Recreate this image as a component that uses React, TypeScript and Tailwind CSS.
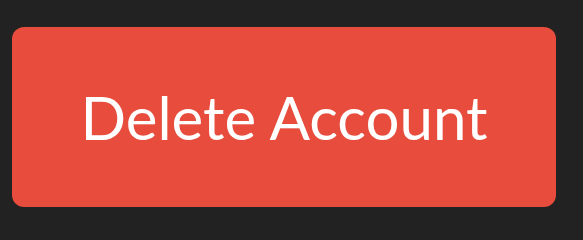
export default function App() {
  return (
    <div className="min-h-screen w-full bg-[#222222] pt-[27px] pl-3 font-['Lato','Liberation_Sans',sans-serif]">
      <button
        type="button"
        className="flex h-[180px] w-[544px] items-center justify-center rounded-[12px] bg-[#e74c3c] text-[60px] leading-none text-white"
      >
        Delete Account
      </button>
    </div>
  );
}
